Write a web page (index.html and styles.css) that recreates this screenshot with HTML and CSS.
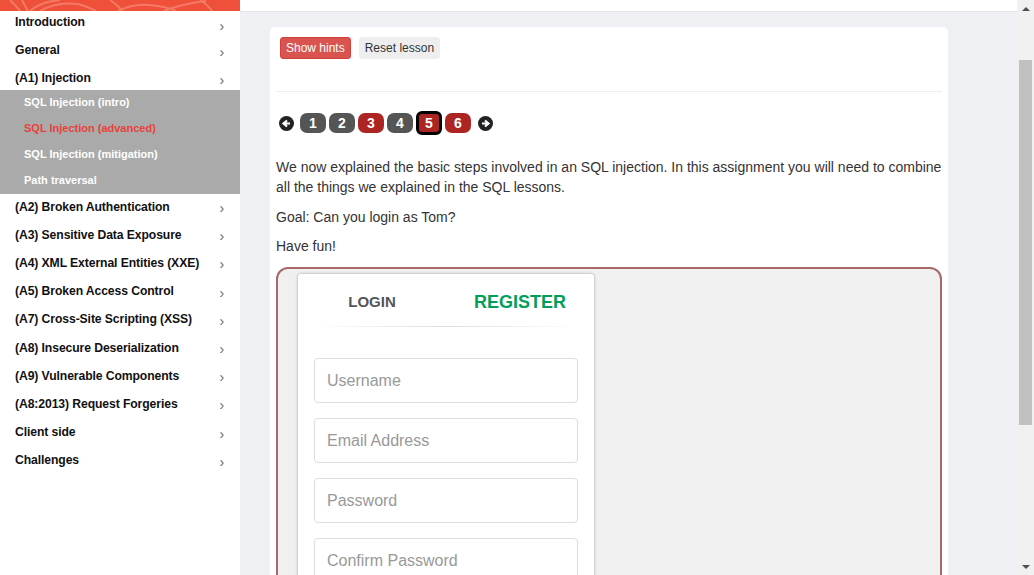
FILE: index.html
```html
<!DOCTYPE html>
<html>
<head>
<meta charset="utf-8">
<link rel="stylesheet" href="styles.css">
</head>
<body>
<aside class="sidebar">
  <div class="banner">
    <svg width="240" height="11" viewBox="0 0 240 11"><g fill="none" stroke="#f47a66" stroke-width="2"><path d="M10 0 C14 4 18 8 20 11"/><path d="M22 0 C24 4 26 8 28 11"/><path d="M30 11 C38 4 48 1 60 0"/><path d="M40 11 C50 5 62 2 78 4"/><path d="M78 4 C86 6 92 9 96 11"/><path d="M110 0 C116 4 120 8 122 11"/><path d="M118 11 C128 6 140 4 150 5"/><path d="M150 5 C160 6 170 8 176 11"/><path d="M164 11 C176 6 190 3 206 1"/><path d="M200 0 C206 4 210 8 212 11"/></g></svg>
  </div>
  <nav class="menu">
    <div class="item first"><span>Introduction</span><span class="chev">›</span></div>
    <div class="item upper"><span>General</span><span class="chev">›</span></div>
    <div class="item upper"><span>(A1) Injection</span><span class="chev">›</span></div>
    <div class="sub">
      <div class="sub-item">SQL Injection (intro)</div>
      <div class="sub-item active">SQL Injection (advanced)</div>
      <div class="sub-item">SQL Injection (mitigation)</div>
      <div class="sub-item">Path traversal</div>
    </div>
    <div class="item"><span>(A2) Broken Authentication</span><span class="chev">›</span></div>
    <div class="item"><span>(A3) Sensitive Data Exposure</span><span class="chev">›</span></div>
    <div class="item"><span>(A4) XML External Entities (XXE)</span><span class="chev">›</span></div>
    <div class="item"><span>(A5) Broken Access Control</span><span class="chev">›</span></div>
    <div class="item"><span>(A7) Cross-Site Scripting (XSS)</span><span class="chev">›</span></div>
    <div class="item"><span>(A8) Insecure Deserialization</span><span class="chev">›</span></div>
    <div class="item"><span>(A9) Vulnerable Components</span><span class="chev">›</span></div>
    <div class="item"><span>(A8:2013) Request Forgeries</span><span class="chev">›</span></div>
    <div class="item"><span>Client side</span><span class="chev">›</span></div>
    <div class="item"><span>Challenges</span><span class="chev">›</span></div>
  </nav>
</aside>
<main class="main">
  <div class="topbar"></div>
  <section class="card">
    <div class="actions">
      <button class="btn btn-red">Show hints</button>
      <button class="btn btn-gray">Reset lesson</button>
    </div>
    <div class="rule"></div>
    <div class="pager">
      <span class="arrow"><svg width="15" height="15" viewBox="0 0 15 15"><circle cx="7.5" cy="7.5" r="7.5" fill="#222"/><path d="M11 7.5H5.5M8 4.5L4.5 7.5 8 10.5" stroke="#fff" stroke-width="2.2" fill="none"/></svg></span>
      <span class="pg dark">1</span>
      <span class="pg dark">2</span>
      <span class="pg red">3</span>
      <span class="pg dark">4</span>
      <span class="pg red cur">5</span>
      <span class="pg red">6</span>
      <span class="arrow"><svg width="15" height="15" viewBox="0 0 15 15"><circle cx="7.5" cy="7.5" r="7.5" fill="#222"/><path d="M4 7.5H9.5M7 4.5L10.5 7.5 7 10.5" stroke="#fff" stroke-width="2.2" fill="none"/></svg></span>
    </div>
    <div class="lesson">
      <p>We now explained the basic steps involved in an SQL injection. In this assignment you will need to combine all the things we explained in the SQL lessons.</p>
      <p>Goal: Can you login as Tom?</p>
      <p>Have fun!</p>
    </div>
    <div class="attack">
      <div class="panel">
        <div class="tabs">
          <div class="tab login">LOGIN</div>
          <div class="tab register">REGISTER</div>
        </div>
        <div class="divider"></div>
        <div class="form">
          <input class="field" type="text" placeholder="Username">
          <input class="field" type="text" placeholder="Email Address">
          <input class="field" type="password" placeholder="Password">
          <input class="field" type="password" placeholder="Confirm Password">
        </div>
      </div>
    </div>
  </section>
</main>
<div class="scrollbar">
  <div class="sb-btn"><span class="tri up"></span></div>
  <div class="sb-track"><div class="sb-thumb"></div></div>
  <div class="sb-btn"><span class="tri down"></span></div>
</div>
</body>
</html>
```

FILE: styles.css
```css
* { box-sizing: border-box; }
html, body { margin: 0; padding: 0; }
body {
  width: 1034px;
  height: 575px;
  overflow: hidden;
  display: flex;
  font-family: "Liberation Sans", Arial, sans-serif;
  color: #333;
  background: #eff0f4;
}
.sidebar {
  width: 240px;
  flex: none;
  background: #fff;
  display: flex;
  flex-direction: column;
}
.banner {
  height: 11px;
  background: #ef503a;
  overflow: hidden;
}
.banner svg { display: block; }
.menu { display: flex; flex-direction: column; }
.item {
  height: 28.2px;
  display: flex;
  align-items: center;
  justify-content: space-between;
  padding: 0 16px 3px 15px;
  font-size: 12.2px;
  font-weight: bold;
  color: #111;
  letter-spacing: -0.1px;
}
.item.upper { height: 28px; padding-top: 4px; padding-bottom: 0; }
.item.first { height: 23px; align-items: flex-start; padding-top: 4px; padding-bottom: 0; }
.chev {
  font-size: 14px;
  font-weight: normal;
  color: #666;
  padding-top: 3px;
}
.sub {
  background: #aaaaaa;
  display: flex;
  flex-direction: column;
}
.sub-item {
  height: 26px;
  display: flex;
  align-items: center;
  padding-left: 24px;
  padding-bottom: 2px;
  font-size: 11px;
  font-weight: bold;
  color: #fff;
}
.sub-item.active { color: #e8413a; }
.main {
  flex: 1;
  display: flex;
  flex-direction: column;
  min-width: 0;
  overflow: hidden;
}
.topbar {
  height: 12px;
  flex: none;
  background: #fff;
  border-bottom: 1px solid #e2e3e7;
}
.card {
  margin: 15px 69px 0 30px;
  background: #fff;
  border-radius: 5px;
  padding: 10px 6px 0 6px;
  flex: 1;
}
.actions {
  display: flex;
  gap: 8px;
  padding-left: 4px;
  height: 54px;
}
.btn {
  height: 22px;
  padding: 0 5px;
  font-family: "Liberation Sans", Arial, sans-serif;
  font-size: 12px;
  border-radius: 3px;
  border: 1px solid transparent;
  line-height: 20px;
  white-space: nowrap;
}
.btn-red { background: #d9534f; border-color: #d43f3a; color: #fff; }
.btn-gray { background: #eee; border-color: #eee; color: #333; }
.rule { border-top: 1px solid #eee; }
.pager {
  display: flex;
  align-items: center;
  gap: 3px;
  margin-top: 20px;
  height: 22px;
  padding-left: 3px;
}
.arrow { width: 15px; height: 15px; display: flex; margin-right: 3px; }
.arrow:last-child { margin-left: 4px; }
.arrow svg { display: block; }
.pg {
  width: 26px;
  height: 20px;
  border-radius: 7px;
  display: flex;
  align-items: center;
  justify-content: center;
  font-size: 14px;
  font-weight: bold;
  color: #fff;
}
.pg.dark { background: #555; }
.pg.red { background: #ad2523; }
.pg.cur { border: 3px solid #000; height: 24px; border-radius: 6px; }
.lesson { padding-top: 23px; }
.lesson p {
  margin: 0 0 9.5px;
  font-size: 14px;
  line-height: 20px;
  color: #333;
}
.attack {
  margin-top: 11px;
  border: 2px solid #a96869;
  border-radius: 12px;
  background: #f0f0f0;
  height: 330px;
  padding: 5px 0 0 20px;
}
.panel {
  width: 296px;
  height: 330px;
  background: #fff;
  border-radius: 3px;
  box-shadow: 0 0 3px rgba(0,0,0,0.35);
}
.tabs {
  display: flex;
  height: 52px;
  padding-top: 15px;
}
.tab {
  flex: 1;
  text-align: center;
  font-weight: bold;
}
.tab.login { font-size: 15px; color: #555; padding-top: 4px; }
.tab.register { font-size: 18px; color: #029f5b; padding-top: 3px; }
.divider {
  margin: 0 17px;
  height: 1px;
  background: linear-gradient(to right, rgba(0,0,0,0), #ddd 50%, rgba(0,0,0,0));
}
.form {
  display: flex;
  flex-direction: column;
  gap: 15px;
  padding: 31px 16px 0;
}
.field {
  height: 45px;
  width: 264px;
  border: 1px solid #ddd;
  border-radius: 4px;
  padding: 0 12px;
  font-family: "Liberation Sans", Arial, sans-serif;
  font-size: 16px;
  color: #555;
  background: #fff;
  outline: none;
}
.field::placeholder { color: #999; }
.scrollbar {
  width: 17px;
  flex: none;
  background: #f1f1f1;
  display: flex;
  flex-direction: column;
}
.sb-btn {
  height: 17px;
  flex: none;
  display: flex;
  align-items: center;
  justify-content: center;
}
.tri { width: 0; height: 0; border-left: 4px solid transparent; border-right: 4px solid transparent; }
.tri.up { border-bottom: 4px solid #505050; }
.tri.down { border-top: 4px solid #505050; }
.sb-track { flex: 1; padding: 43px 2px 0; }
.sb-thumb { height: 365px; background: #c1c1c1; }
```
